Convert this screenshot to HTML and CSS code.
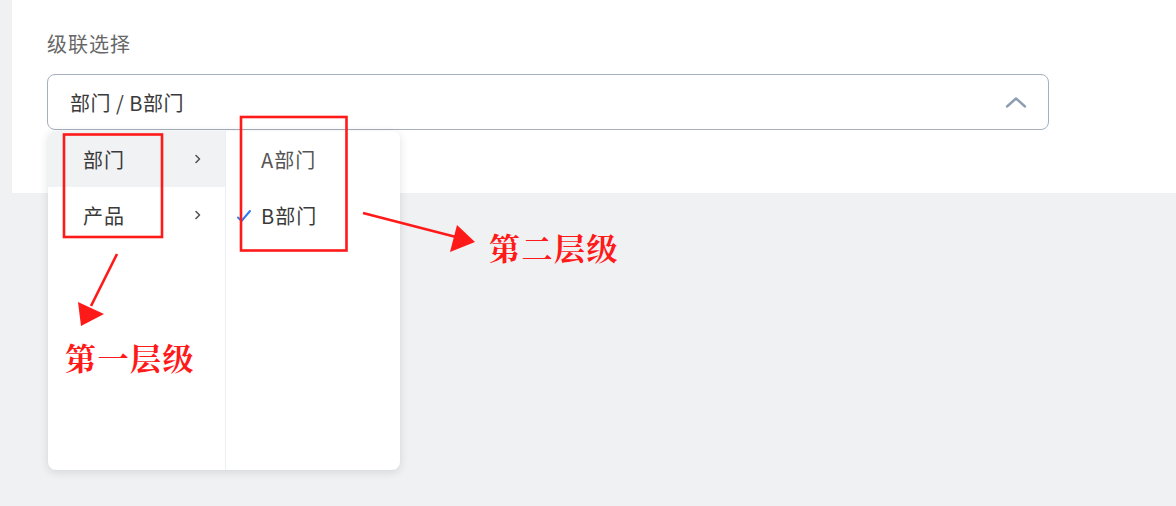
FILE: index.html
```html
<!DOCTYPE html>
<html lang="zh">
<head>
<meta charset="utf-8">
<title>级联选择</title>
<link rel="stylesheet" href="styles.css">
</head>
<body>
<div class="page">
  <section class="panel">
    <div class="label">级联选择</div>
    <div class="select">
      <span class="value">部门 / B部门</span>
      <svg class="caret" width="22" height="12" viewBox="0 0 22 12"><path d="M2 10.5 L11 2.5 L20 10.5" fill="none" stroke="#8e9db1" stroke-width="2.4" stroke-linecap="round" stroke-linejoin="round"/></svg>
    </div>
  </section>

  <div class="dropdown">
    <ul class="col col1">
      <li class="item active"><span>部门</span><svg class="arrow" width="8" height="12" viewBox="0 0 8 12"><path d="M2 2.5 L5.5 6 L2 9.5" fill="none" stroke="#555" stroke-width="1.6" stroke-linecap="round" stroke-linejoin="round"/></svg></li>
      <li class="item"><span>产品</span><svg class="arrow" width="8" height="12" viewBox="0 0 8 12"><path d="M2 2.5 L5.5 6 L2 9.5" fill="none" stroke="#555" stroke-width="1.6" stroke-linecap="round" stroke-linejoin="round"/></svg></li>
    </ul>
    <ul class="col col2">
      <li class="item sub"><span>A部门</span></li>
      <li class="item sub checked"><svg class="check" width="16" height="14" viewBox="0 0 16 14"><path d="M2 8.5 L5.5 12 L14 2" fill="none" stroke="#2f7bef" stroke-width="2" stroke-linecap="round" stroke-linejoin="round"/></svg><span>B部门</span></li>
    </ul>
  </div>

  <svg class="marks" width="1176" height="506" viewBox="0 0 1176 506">
    <g fill="none" stroke="#ff1a1a" stroke-width="2.6">
      <rect x="64" y="134.5" width="98" height="102.5"/>
      <rect x="241" y="117" width="105.5" height="133.5"/>
      <line x1="117" y1="254" x2="91" y2="306"/>
      <line x1="363" y1="213" x2="456" y2="237"/>
    </g>
    <g fill="#ff1a1a">
      <polygon points="81,326 78,302 104,314"/>
      <polygon points="475,242 457,225 450,252"/>
    </g>
  </svg>
  <div class="note note1">第一层级</div>
  <div class="note note2">第二层级</div>
</div>
</body>
</html>
```

FILE: styles.css
```css
* { box-sizing: border-box; }
html, body { margin: 0; padding: 0; }
body {
  background: #f0f1f3;
  font-family: "Noto Sans CJK SC", "Noto Sans", sans-serif;
  width: 1176px;
  height: 506px;
  overflow: hidden;
}
.page { position: relative; width: 1176px; height: 506px; }
.panel {
  margin-left: 12px;
  height: 193px;
  background: #fff;
  padding: 31px 0 0 35px;
}
.label {
  font-size: 20px;
  line-height: 26px;
  letter-spacing: 1px;
  color: #676767;
  margin-bottom: 17px;
}
.select {
  width: 1002px;
  height: 56px;
  border: 1.5px solid #a6afbd;
  border-radius: 8px;
  display: flex;
  align-items: center;
  justify-content: space-between;
  padding: 0 21px 0 22px;
}
.value { font-size: 20px; letter-spacing: 0.5px; color: #3a3a3a; }
.caret { display: block; }

.dropdown {
  position: absolute;
  left: 48px;
  top: 131px;
  width: 352px;
  height: 339px;
  background: #fff;
  border-radius: 8px;
  box-shadow: 0 2px 8px rgba(30, 40, 60, 0.14);
  display: flex;
  overflow: hidden;
}
.col { list-style: none; margin: 0; padding: 0; }
.col1 { width: 178px; border-right: 1px solid #eceef1; }
.col2 { flex: 1; }
.item {
  height: 56px;
  display: flex;
  align-items: center;
  font-size: 20px;
  letter-spacing: 1px;
  color: #3a3a3a;
  padding-left: 35px;
  position: relative;
}
.col1 .item { justify-content: space-between; padding-right: 23px; }
.item.active { background: #f1f2f4; }
.item.sub { color: #555; }
.item.checked { color: #3a3a3a; }
.check { position: absolute; left: 10px; top: 22px; }

.marks { position: absolute; left: 0; top: 0; pointer-events: none; }
.note {
  position: absolute;
  font-family: "Noto Serif CJK SC", "Noto Sans CJK SC", serif;
  font-weight: 700;
  font-size: 31px;
  line-height: 32px;
  color: #ff1a1a;
  letter-spacing: 1.5px;
}
.note1 { left: 65px; top: 341px; }
.note2 { left: 489px; top: 231px; }
```
